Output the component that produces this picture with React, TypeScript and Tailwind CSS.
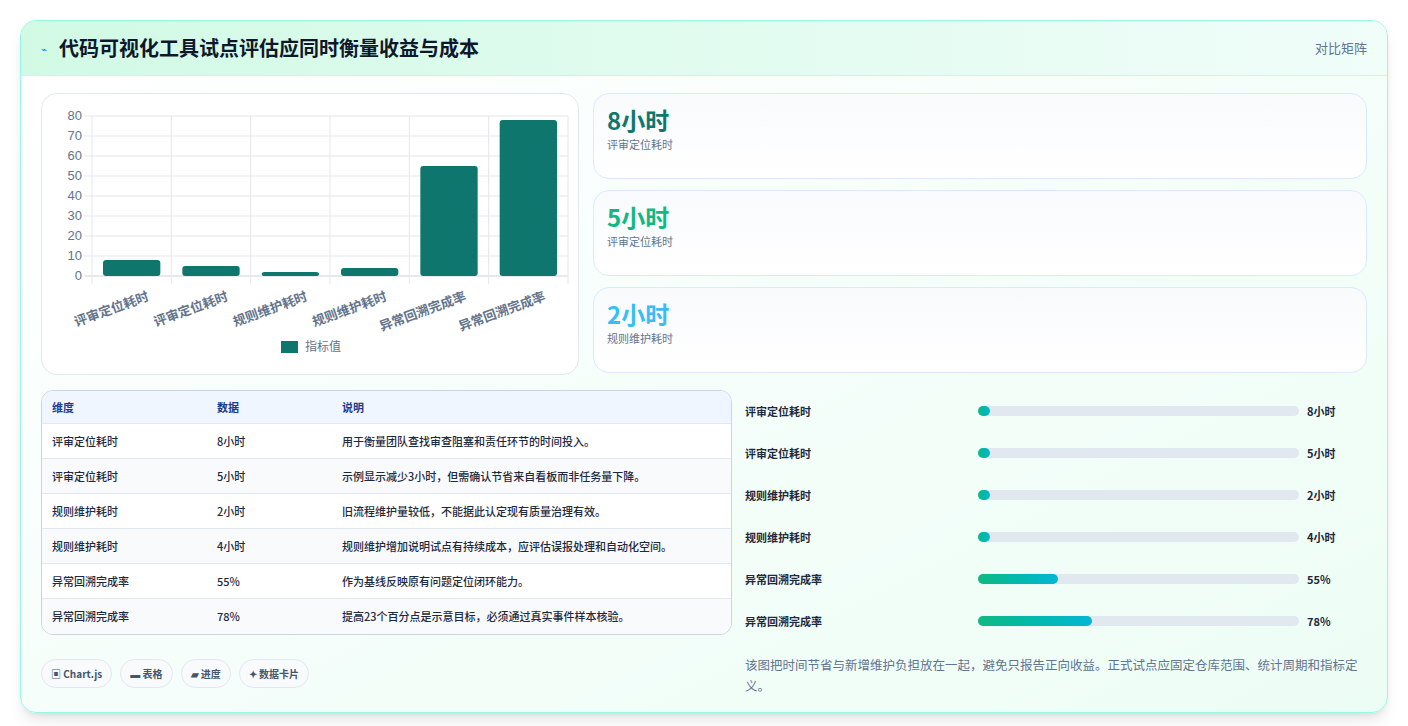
import React from "react";

const font = { fontFamily: '"Noto Sans CJK SC", "Noto Sans", sans-serif' };
const labels = ["评审定位耗时", "评审定位耗时", "规则维护耗时", "规则维护耗时", "异常回溯完成率", "异常回溯完成率"];
const vals = [8, 5, 2, 4, 55, 78];
const shown = ["8小时", "5小时", "2小时", "4小时", "55%", "78%"];
const notes = [
  "用于衡量团队查找审查阻塞和责任环节的时间投入。",
  "示例显示减少3小时，但需确认节省来自看板而非任务量下降。",
  "旧流程维护量较低，不能据此认定现有质量治理有效。",
  "规则维护增加说明试点有持续成本，应评估误报处理和自动化空间。",
  "作为基线反映原有问题定位闭环能力。",
  "提高23个百分点是示意目标，必须通过真实事件样本核验。",
];

function Chart() {
  const x0 = 50, x1 = 526, y0 = 22, y1 = 182;
  const cw = (x1 - x0) / 6;
  return (
    <svg width="538" height="280" viewBox="0 0 538 280" style={{ fontFamily: '"Liberation Sans", "Noto Sans CJK SC", sans-serif' }}>
      {[0, 10, 20, 30, 40, 50, 60, 70, 80].map((v) => {
        const y = y1 - v * 2;
        return (
          <g key={v}>
            <line x1={x0 - 8} x2={x1} y1={y} y2={y} stroke={v === 0 ? "#cbd5e1" : "#e5e7eb"} />
            <text x={x0 - 10} y={y + 4} textAnchor="end" fontSize="13" fill="#64748b">{v}</text>
          </g>
        );
      })}
      {[0, 1, 2, 3, 4, 5, 6].map((i) => (
        <line key={i} x1={x0 + i * cw} x2={x0 + i * cw} y1={y0} y2={y1 + 8} stroke="#e5e7eb" />
      ))}
      {vals.map((v, i) => (
        <rect key={i} x={x0 + i * cw + 11} y={y1 - v * 2} width={cw - 22} height={v * 2} rx="3" fill="#0f766e" />
      ))}
      {labels.map((l, i) => (
        <text key={i} x={x0 + i * cw + cw / 2 + 18} y={y1 + 24} textAnchor="end" fontSize="13" fontWeight="600" fill="#64748b" transform={`rotate(-20 ${x0 + i * cw + cw / 2 + 18} ${y1 + 24})`}>{l}</text>
      ))}
      <rect x="239" y="247" width="17" height="12" fill="#0f766e" />
      <text x="263" y="257" fontSize="12" fill="#64748b" style={font}>指标值</text>
    </svg>
  );
}

export default function App() {
  return (
    <div className="min-h-screen bg-white p-5" style={font}>
      <div className="rounded-2xl border border-teal-200 bg-gradient-to-br from-white to-[#ecfdf5] shadow-lg overflow-hidden">
        <div className="flex h-[55px] items-center justify-between border-b border-[#dbeafe] bg-gradient-to-r from-[#d1fae5] to-[#f0fdf9] px-5">
          <div className="flex items-center gap-3">
            <span className="text-[10px] text-blue-500">⌁</span>
            <h1 className="text-[20px] font-bold text-[#0f172a]">代码可视化工具试点评估应同时衡量收益与成本</h1>
          </div>
          <span className="text-[13px] text-slate-500">对比矩阵</span>
        </div>
        <div className="px-5 pt-[17px] pb-[16px]">
          <div className="flex gap-[14px]">
            <div className="h-[282px] w-[538px] shrink-0 rounded-2xl border border-slate-200 bg-white">
              <Chart />
            </div>
            <div className="flex flex-1 flex-col gap-[11px]">
              {[["8小时", "评审定位耗时", "text-[#0f766e]"], ["5小时", "评审定位耗时", "text-[#10b981]"], ["2小时", "规则维护耗时", "text-[#38bdf8]"]].map(([v, l, c], i) => (
                <div key={i} className="h-[86px] rounded-2xl border border-[#dbeafe] bg-gradient-to-b from-[#f8fafc] to-white px-[13px] pt-[10px]">
                  <div className={`text-[24px] font-bold leading-[32px] ${c}`}>{v}</div>
                  <div className="text-[11px] text-slate-500">{l}</div>
                </div>
              ))}
            </div>
          </div>
          <div className="mt-[15px] flex gap-[13px]">
            <div className="w-[691px] shrink-0">
              <div className="overflow-hidden rounded-xl border border-slate-300 text-[11px] font-medium text-slate-800">
                <div className="flex h-[33px] items-center border-b border-slate-200 bg-[#eff6ff] px-[10px] font-bold text-[#1e3a8a]">
                  <div className="w-[165px]">维度</div><div className="w-[125px]">数据</div><div>说明</div>
                </div>
                {labels.map((l, i) => (
                  <div key={i} className={`flex h-[35px] items-center px-[10px] ${i < 5 ? "border-b border-slate-200" : ""} ${i % 2 ? "bg-[#f8fafc]" : "bg-white"}`}>
                    <div className="w-[165px]">{l}</div><div className="w-[125px]">{shown[i]}</div><div>{notes[i]}</div>
                  </div>
                ))}
              </div>
              <div className="mt-6 flex gap-2 text-[10px] font-bold text-slate-600">
                {["▣ Chart.js", "▬ 表格", "▰ 进度", "✦ 数据卡片"].map((t) => (
                  <span key={t} className="rounded-full border border-slate-200 bg-[#f8fafc] px-[9px] py-[6px]">{t}</span>
                ))}
              </div>
            </div>
            <div className="flex-1">
              <div className="flex flex-col">
                {labels.map((l, i) => {
                  const w = Math.max((vals[i] / 220) * 100, 3.7);
                  return (
                    <div key={i} className="flex h-[42px] items-center text-[11px] font-bold text-slate-800">
                      <div className="w-[233px]">{l}</div>
                      <div className="h-[10px] w-[321px] rounded-full bg-[#e2e8f0]">
                        <div className="h-full rounded-full bg-gradient-to-r from-[#10b981] to-[#06b6d4]" style={{ width: `${w}%` }} />
                      </div>
                      <div className="ml-2">{shown[i]}</div>
                    </div>
                  );
                })}
              </div>
              <p className="mt-3 text-[12.5px] leading-[21px] text-slate-500">该图把时间节省与新增维护负担放在一起，避免只报告正向收益。正式试点应固定仓库范围、统计周期和指标定义。</p>
            </div>
          </div>
        </div>
      </div>
    </div>
  );
}
